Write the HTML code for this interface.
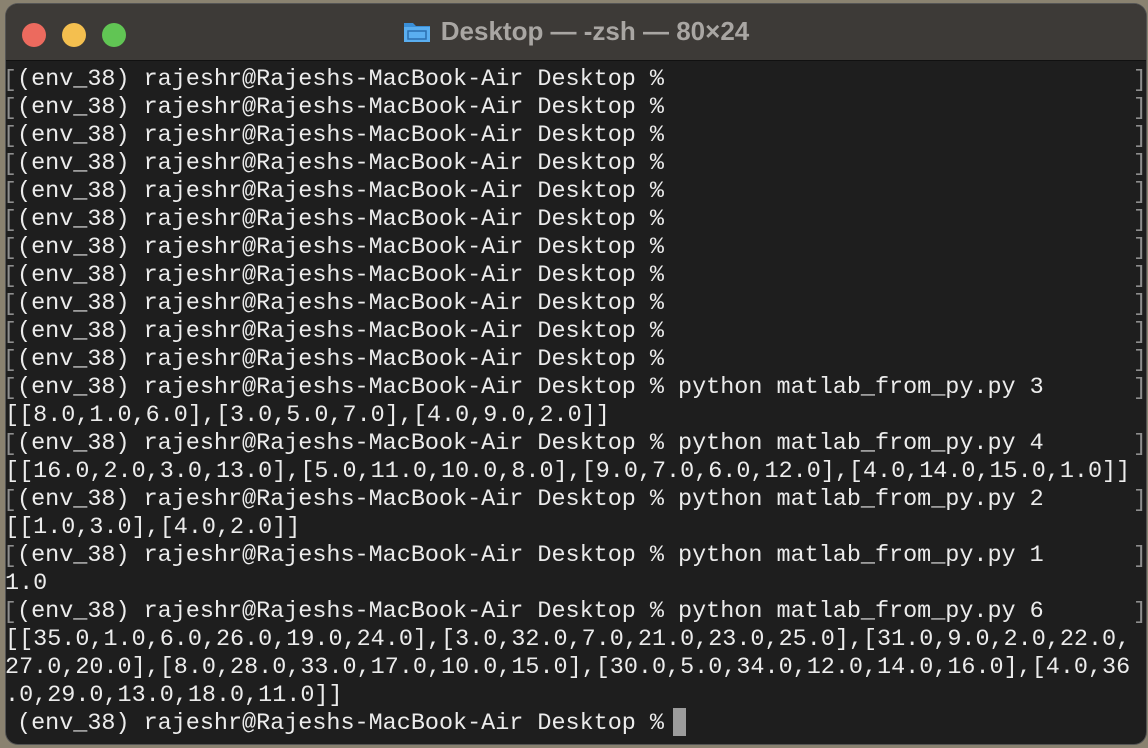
<!DOCTYPE html>
<html><head><meta charset="utf-8"><style>
html,body{margin:0;padding:0;width:1148px;height:748px;overflow:hidden;background:#8a8270;}
.win{position:absolute;left:6px;top:4px;width:1140px;height:740px;border-radius:12px;background:#1e1e1e;overflow:hidden;box-shadow:0 0 0 1px #555;}
.tb{position:absolute;left:0;top:0;width:100%;height:56px;background:#3d3a37;border-bottom:1px solid #111;}
.dot{position:absolute;top:19px;width:24px;height:24px;border-radius:50%;}
.title{position:absolute;left:0;right:0;top:12px;text-align:center;font:bold 26px "Liberation Sans",sans-serif;color:#a9a6a3;}
.term{position:absolute;left:0;top:66px;width:1148px;}
.r{position:relative;height:28px;font-family:"Liberation Mono",monospace;font-size:23.45px;line-height:28px;color:#ececec;white-space:pre;}
.r span{position:absolute;top:0;}
.p{left:17px;}
.o{left:5px;}
.bl,.br{color:#8e8e8e;font-size:23px;}
.bl{left:3px;}
.br{left:1133px;}
.cur{position:absolute;left:673px;top:708px;width:13px;height:28px;background:#9c9c9c;}
</style></head><body>
<div class="win">
<div class="tb">
<div class="dot" style="left:16px;background:#ec6a5e"></div>
<div class="dot" style="left:56px;background:#f4bf4f"></div>
<div class="dot" style="left:96px;background:#61c554"></div>
<div class="title"><svg width="28" height="24" viewBox="0 0 28 24" style="vertical-align:-3px;margin-right:10px"><path d="M1 4h9l3 3h14v16H1z" fill="#3a8fd8"/><rect x="1" y="8" width="26" height="15" fill="#5aaef0"/><rect x="5" y="12" width="18" height="8" fill="none" stroke="#2b6fb0" stroke-width="1.5"/></svg>Desktop — -zsh — 80×24</div>
</div>
</div>
<div class="term">
<div class="r"><span class="bl">[</span><span class="p">(env_38) rajeshr@Rajeshs-MacBook-Air Desktop %</span><span class="br">]</span></div>
<div class="r"><span class="bl">[</span><span class="p">(env_38) rajeshr@Rajeshs-MacBook-Air Desktop %</span><span class="br">]</span></div>
<div class="r"><span class="bl">[</span><span class="p">(env_38) rajeshr@Rajeshs-MacBook-Air Desktop %</span><span class="br">]</span></div>
<div class="r"><span class="bl">[</span><span class="p">(env_38) rajeshr@Rajeshs-MacBook-Air Desktop %</span><span class="br">]</span></div>
<div class="r"><span class="bl">[</span><span class="p">(env_38) rajeshr@Rajeshs-MacBook-Air Desktop %</span><span class="br">]</span></div>
<div class="r"><span class="bl">[</span><span class="p">(env_38) rajeshr@Rajeshs-MacBook-Air Desktop %</span><span class="br">]</span></div>
<div class="r"><span class="bl">[</span><span class="p">(env_38) rajeshr@Rajeshs-MacBook-Air Desktop %</span><span class="br">]</span></div>
<div class="r"><span class="bl">[</span><span class="p">(env_38) rajeshr@Rajeshs-MacBook-Air Desktop %</span><span class="br">]</span></div>
<div class="r"><span class="bl">[</span><span class="p">(env_38) rajeshr@Rajeshs-MacBook-Air Desktop %</span><span class="br">]</span></div>
<div class="r"><span class="bl">[</span><span class="p">(env_38) rajeshr@Rajeshs-MacBook-Air Desktop %</span><span class="br">]</span></div>
<div class="r"><span class="bl">[</span><span class="p">(env_38) rajeshr@Rajeshs-MacBook-Air Desktop %</span><span class="br">]</span></div>
<div class="r"><span class="bl">[</span><span class="p">(env_38) rajeshr@Rajeshs-MacBook-Air Desktop % python matlab_from_py.py 3</span><span class="br">]</span></div>
<div class="r"><span class="o">[[8.0,1.0,6.0],[3.0,5.0,7.0],[4.0,9.0,2.0]]</span></div>
<div class="r"><span class="bl">[</span><span class="p">(env_38) rajeshr@Rajeshs-MacBook-Air Desktop % python matlab_from_py.py 4</span><span class="br">]</span></div>
<div class="r"><span class="o">[[16.0,2.0,3.0,13.0],[5.0,11.0,10.0,8.0],[9.0,7.0,6.0,12.0],[4.0,14.0,15.0,1.0]]</span></div>
<div class="r"><span class="bl">[</span><span class="p">(env_38) rajeshr@Rajeshs-MacBook-Air Desktop % python matlab_from_py.py 2</span><span class="br">]</span></div>
<div class="r"><span class="o">[[1.0,3.0],[4.0,2.0]]</span></div>
<div class="r"><span class="bl">[</span><span class="p">(env_38) rajeshr@Rajeshs-MacBook-Air Desktop % python matlab_from_py.py 1</span><span class="br">]</span></div>
<div class="r"><span class="o">1.0</span></div>
<div class="r"><span class="bl">[</span><span class="p">(env_38) rajeshr@Rajeshs-MacBook-Air Desktop % python matlab_from_py.py 6</span><span class="br">]</span></div>
<div class="r"><span class="o">[[35.0,1.0,6.0,26.0,19.0,24.0],[3.0,32.0,7.0,21.0,23.0,25.0],[31.0,9.0,2.0,22.0,</span></div>
<div class="r"><span class="o">27.0,20.0],[8.0,28.0,33.0,17.0,10.0,15.0],[30.0,5.0,34.0,12.0,14.0,16.0],[4.0,36</span></div>
<div class="r"><span class="o">.0,29.0,13.0,18.0,11.0]]</span></div>
<div class="r"><span class="p">(env_38) rajeshr@Rajeshs-MacBook-Air Desktop %</span></div>
</div>
<div class="cur"></div>
</body></html>
